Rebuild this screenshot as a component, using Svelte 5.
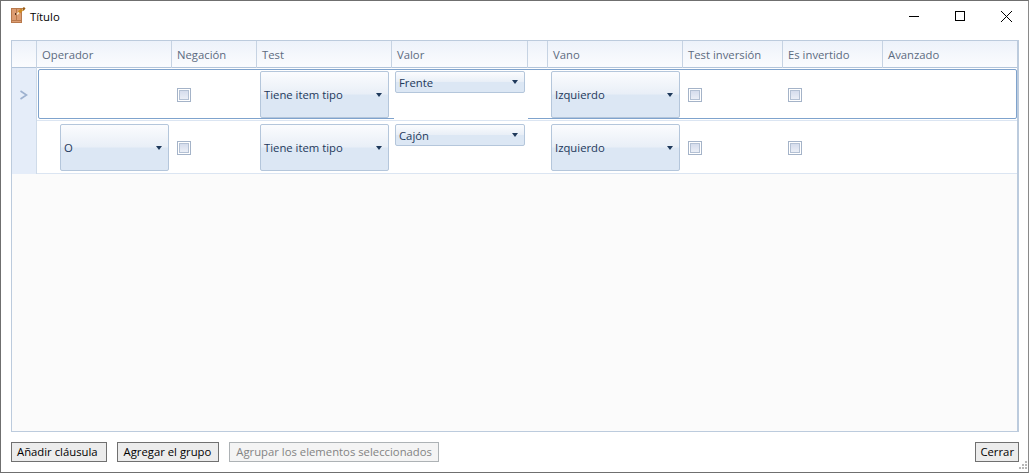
<script>
	const columns = ["Operador", "Negación", "Test", "Valor", "", "Vano", "Test inversión", "Es invertido", "Avanzado"];

	const rows = [
		{ operador: "", valor: "Frente", selected: true },
		{ operador: "O", valor: "Cajón", selected: false }
	];
</script>

<div class="ventana">
	<div class="titulo">
		<svg class="logo" width="18" height="18" viewBox="0 0 18 18">
			<rect x="0.5" y="1.5" width="10" height="14" fill="#dc9c72" stroke="#b8794c" />
			<path d="M0.5 13.5h10M5.5 2v11" stroke="#b8794c" fill="none" />
			<rect x="4" y="6" width="1" height="2" fill="#553322" />
			<path d="M8 5.5l3-3" stroke="#d08a20" stroke-width="3" />
			<path d="M11 1.5l2-1.5 1.5 1.5-2 2.5z" fill="#9a5c14" />
			<path d="M6 7.5l2-2" stroke="#f5e6c8" stroke-width="1.6" />
		</svg>
		<span>Título</span>
		<div class="controles">
			<svg width="46" height="30" viewBox="0 0 46 30"><path d="M19 15.5h10" stroke="#000" /></svg>
			<svg width="46" height="30" viewBox="0 0 46 30"><rect x="19.5" y="10.5" width="9" height="9" fill="none" stroke="#000" /></svg>
			<svg width="46" height="30" viewBox="0 0 46 30"><path d="M19 10l11 11M30 10l-11 11" stroke="#000" fill="none" /></svg>
		</div>
	</div>

	<div class="tabla">
		<div class="fila cabecera">
			<div class="indicador"></div>
			{#each columns as col}
				<div class="th">{col}</div>
			{/each}
		</div>

		{#each rows as row}
			<div class="fila datos" class:selected={row.selected}>
				<div class="indicador">
					{#if row.selected}
						<svg width="10" height="10" viewBox="0 0 10 10"><path d="M1.5 1l6 4-6 4" fill="none" stroke="#9db1cf" stroke-width="1.6" /></svg>
					{/if}
				</div>
				<div class="td operador">
					{#if row.operador}
						<div class="combo alto"><span>{row.operador}</span><i></i></div>
					{/if}
				</div>
				<div class="td check"><div class="caja"></div></div>
				<div class="td"><div class="combo alto"><span>Tiene item tipo</span><i></i></div></div>
				<div class="td valor"><div class="combo bajo"><span>{row.valor}</span><i></i></div></div>
				<div class="td"></div>
				<div class="td"><div class="combo alto"><span>Izquierdo</span><i></i></div></div>
				<div class="td check"><div class="caja"></div></div>
				<div class="td check"><div class="caja"></div></div>
				<div class="td"></div>
			</div>
		{/each}
	</div>

	<div class="pie">
		<button class="anadir">Añadir cláusula</button>
		<button class="agregar">Agregar el grupo</button>
		<button disabled>Agrupar los elementos seleccionados</button>
		<button class="cerrar">Cerrar</button>
	</div>
	<svg class="grip" width="12" height="12" viewBox="0 0 12 12" fill="#b8b8b8">
		<rect x="9" y="1" width="2" height="2" />
		<rect x="6" y="4" width="2" height="2" /><rect x="9" y="4" width="2" height="2" />
		<rect x="3" y="7" width="2" height="2" /><rect x="6" y="7" width="2" height="2" /><rect x="9" y="7" width="2" height="2" />
	</svg>
</div>

<style>
	:global(body) {
		margin: 0;
		background: #fff;
	}
	.ventana {
		position: relative;
		box-sizing: border-box;
		width: 1029px;
		height: 473px;
		display: flex;
		flex-direction: column;
		border: 1px solid #6f6f6f;
		border-right-color: #8a8a8a;
		background: #fff;
		font-family: "Open Sans", "Noto Sans", sans-serif;
		font-size: 11.3px;
		color: #1e395b;
	}
	.titulo {
		height: 39px;
		flex: none;
		display: flex;
		align-items: flex-start;
		padding-left: 10px;
		color: #000;
		box-sizing: border-box;
	}
	.logo {
		margin-top: 6px;
		margin-right: 1px;
	}
	.titulo span {
		margin-top: 8px;
	}
	.controles {
		margin-left: auto;
		display: flex;
	}
	.tabla {
		flex: 1;
		margin: 0 9px 0 10px;
		border: 1px solid #bccbdd;
		border-right-width: 2px;
		background: #fbfbfb;
		min-height: 0;
	}
	.fila {
		display: grid;
		grid-template-columns: 25px 135px 85px 135px 136px 20px 135px 100px 100px 1fr;
		box-sizing: border-box;
	}
	.cabecera {
		height: 27px;
		border-bottom: 1px solid #b3c5da;
		background: linear-gradient(#edf2fa, #fbfcfe);
	}
	.th {
		border-right: 1px solid #c6d3e3;
		padding-left: 5px;
		line-height: 27px;
		color: #5c6b80;
		white-space: nowrap;
	}
	.th:last-child {
		border-right: 0;
	}
	.datos {
		height: 53px;
		background: #fff;
		border-bottom: 1px solid #dbe5f2;
	}
	.indicador {
		background: #e5edf9;
		border-right: 1px solid #cfdbe9;
		display: flex;
		align-items: center;
		justify-content: center;
	}
	.cabecera .indicador {
		background: none;
		border-right-color: #c6d3e3;
	}
	.td {
		position: relative;
		padding: 3px;
		box-sizing: border-box;
	}
	.selected {
		position: relative;
	}
	.selected::after {
		content: "";
		position: absolute;
		left: 26px;
		right: 0;
		top: 1px;
		bottom: 1px;
		border: 1px solid #7fa3cd;
		border-radius: 2px;
		pointer-events: none;
	}
	.selected .valor {
		z-index: 1;
		align-self: start;
		background: #fff;
		height: 49px;
		margin: 2px 0 0 2px;
		padding: 1px 3px 0 1px;
	}
	.operador {
		padding-left: 23px;
	}
	.combo {
		display: flex;
		align-items: center;
		justify-content: space-between;
		box-sizing: border-box;
		border: 1px solid #b4c6db;
		border-radius: 2px;
		background: linear-gradient(#fbfcfe, #e9eff7 48%, #dce7f4 52%, #dce7f4);
		padding: 0 6px 0 3px;
		color: #1e395b;
	}
	.alto {
		height: 47px;
	}
	.bajo {
		height: 22px;
	}
	.combo span {
		white-space: nowrap;
	}
	.combo i {
		width: 0;
		height: 0;
		border-left: 3px solid transparent;
		border-right: 3px solid transparent;
		border-top: 4px solid #1e395b;
	}
	.check {
		display: flex;
		align-items: center;
		padding: 1px 0 0 5px;
	}
	.caja {
		box-sizing: border-box;
		width: 14px;
		height: 14px;
		border: 1px solid #a4b3c8;
		box-shadow: inset 0 0 0 1px #fff, inset 0 0 0 2px #b4c1d4;
		background: linear-gradient(#d0d8ea, #f0f3f9);
	}
	.pie {
		height: 40px;
		flex: none;
		display: flex;
		align-items: flex-start;
		gap: 10px;
		padding: 10px 9px 0 10px;
		box-sizing: border-box;
	}
	button {
		height: 20px;
		padding: 0 6px;
		border: 1px solid #707070;
		background: #ececec;
		font: inherit;
		color: #000;
		line-height: 18px;
	}
	.anadir {
		padding: 0 8px 0 5px;
	}
	.agregar {
		padding-right: 7px;
	}
	button:disabled {
		border-color: #adb2b5;
		background: #f4f4f4;
		color: #838383;
	}
	.cerrar {
		margin-left: auto;
		padding: 0 4px;
	}
	.grip {
		position: absolute;
		right: 0;
		bottom: 0;
	}
</style>
